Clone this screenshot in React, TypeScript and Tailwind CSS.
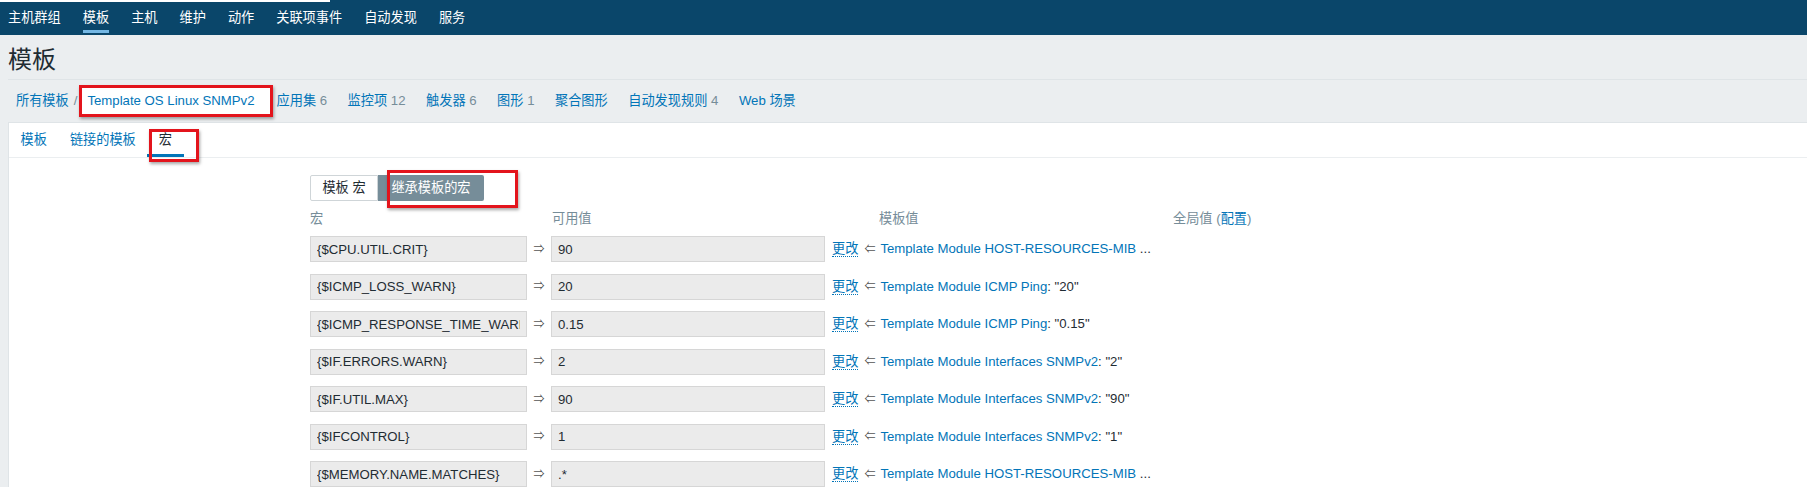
import React from "react";

const navItems = ["主机群组", "模板", "主机", "维护", "动作", "关联项事件", "自动发现", "服务"];

const crumbs = [
  { label: "应用集", count: "6" },
  { label: "监控项", count: "12" },
  { label: "触发器", count: "6" },
  { label: "图形", count: "1" },
  { label: "聚合图形", count: "" },
  { label: "自动发现规则", count: "4" },
  { label: "Web 场景", count: "" },
];

const macros = [
  { name: "{$CPU.UTIL.CRIT}", value: "90", tpl: "Template Module HOST-RESOURCES-MIB", rest: " ..." },
  { name: "{$ICMP_LOSS_WARN}", value: "20", tpl: "Template Module ICMP Ping", rest: ': "20"' },
  { name: "{$ICMP_RESPONSE_TIME_WARN}", value: "0.15", tpl: "Template Module ICMP Ping", rest: ': "0.15"' },
  { name: "{$IF.ERRORS.WARN}", value: "2", tpl: "Template Module Interfaces SNMPv2", rest: ': "2"' },
  { name: "{$IF.UTIL.MAX}", value: "90", tpl: "Template Module Interfaces SNMPv2", rest: ': "90"' },
  { name: "{$IFCONTROL}", value: "1", tpl: "Template Module Interfaces SNMPv2", rest: ': "1"' },
  { name: "{$MEMORY.NAME.MATCHES}", value: ".*", tpl: "Template Module HOST-RESOURCES-MIB", rest: " ..." },
];

const RedBox = ({ className }: { className: string }) => (
  <div
    className={`absolute pointer-events-none border-[3px] border-[#e3141c] shadow-[1px_2px_3px_rgba(0,0,0,0.35)] ${className}`}
  />
);

export default function App() {
  return (
    <div className="relative w-[1807px] min-h-[487px] bg-[#ebeef0] font-['Liberation_Sans','Noto_Sans_CJK_SC',sans-serif] text-[13.2px] text-[#1f2c33] overflow-hidden">
      {/* top menu */}
      <div className="relative h-[35px] bg-[#0a466a] flex items-center gap-[22px] pl-2">
        <div className="absolute top-0 left-0 w-[330px] h-[2px] bg-white" />
        {navItems.map((item) => (
          <div key={item} className="relative h-full flex items-center text-white">
            {item}
            {item === "模板" && (
              <div className="absolute left-0 right-0 bottom-[2px] h-[3px] bg-[#74b7e4]" />
            )}
          </div>
        ))}
      </div>

      {/* page title */}
      <div className="ml-2 h-[45px] border-b border-[#dfe4e7] flex items-center pt-[6px]">
        <h1 className="text-[24px] leading-none">模板</h1>
      </div>

      {/* breadcrumbs */}
      <div className="ml-2 pl-2 h-[43px] border-b border-[#dfe4e7] flex items-center">
        <a className="text-[#0275b8]">所有模板</a>
        <span className="ml-[5px] mr-[2px] text-[#768d99]">/</span>
        <div className="h-[32px] flex items-center bg-white border-[3px] border-[#e3141c] shadow-[1px_2px_3px_rgba(0,0,0,0.35)] pl-[5px] pr-[15px]">
          <a className="text-[#0275b8]">Template OS Linux SNMPv2</a>
        </div>
        <div className="ml-1 flex items-center gap-[20.5px]">
          {crumbs.map((c) => (
            <span key={c.label} className="whitespace-nowrap">
              <a className="text-[#0275b8]">{c.label}</a>
              {c.count && <span className="text-[#768d99]"> {c.count}</span>}
            </span>
          ))}
        </div>
      </div>

      {/* white panel */}
      <div className="ml-2 bg-white border-l border-[#dfe4e7] min-h-[330px]">
        <div className="h-[35px] border-b border-[#ebeef0] flex">
          <div className="px-[11.5px] flex items-center text-[#0275b8]">模板</div>
          <div className="px-[11.5px] flex items-center text-[#0275b8]">链接的模板</div>
          <div className="relative px-[11.5px] flex items-center border-b-[3px] border-[#0275b8] pt-[3px]">
            宏
            <RedBox className="left-[2px] top-[6px] w-[50px] h-[33px]" />
          </div>
        </div>

        <div className="pl-[301px] pt-[17px] pb-6">
          {/* segmented */}
          <div className="relative flex h-[26px]">
            <div className="w-[68px] flex items-center justify-center border border-[#cfd5d8] rounded-l-[2px] bg-white">
              模板 宏
            </div>
            <div className="w-[106px] flex items-center justify-center bg-[#768d99] text-white rounded-r-[2px]">
              继承模板的宏
            </div>
            <RedBox className="left-[77px] -top-[5px] w-[131px] h-[38px]" />
          </div>

          {/* headers */}
          <div className="mt-[10px] h-[16px] flex items-center text-[#768d99]">
            <div className="w-[242px]">宏</div>
            <div className="w-[327px]">可用值</div>
            <div className="w-[294px]">模板值</div>
            <div>
              全局值 (<a className="text-[#0275b8]">配置</a>)
            </div>
          </div>

          {/* rows */}
          <div className="mt-[9px] flex flex-col gap-[11.5px]">
            {macros.map((m) => (
              <div key={m.name} className="flex items-center h-[26px]">
                <input
                  readOnly
                  value={m.name}
                  className="w-[217px] h-[26px] px-[6px] bg-[#ebebeb] border border-[#d6d6d6] text-[#1f2c33] outline-none"
                />
                <span className="w-[24px] text-center text-[11px] text-[#555]">⇒</span>
                <input
                  readOnly
                  value={m.value}
                  className="w-[274px] h-[26px] px-[6px] bg-[#ebebeb] border border-[#d6d6d6] text-[#1f2c33] outline-none"
                />
                <a className="ml-[7px] text-[#0275b8] leading-[15px] border-b border-dotted border-[#0275b8]">更改</a>
                <span className="ml-[6px] text-[11px] text-[#555]">⇐</span>
                <span className="ml-[5px] whitespace-nowrap">
                  <a className="text-[#0275b8]">{m.tpl}</a>
                  <span className="text-[#1f2c33]">{m.rest}</span>
                </span>
              </div>
            ))}
          </div>
        </div>
      </div>
    </div>
  );
}
